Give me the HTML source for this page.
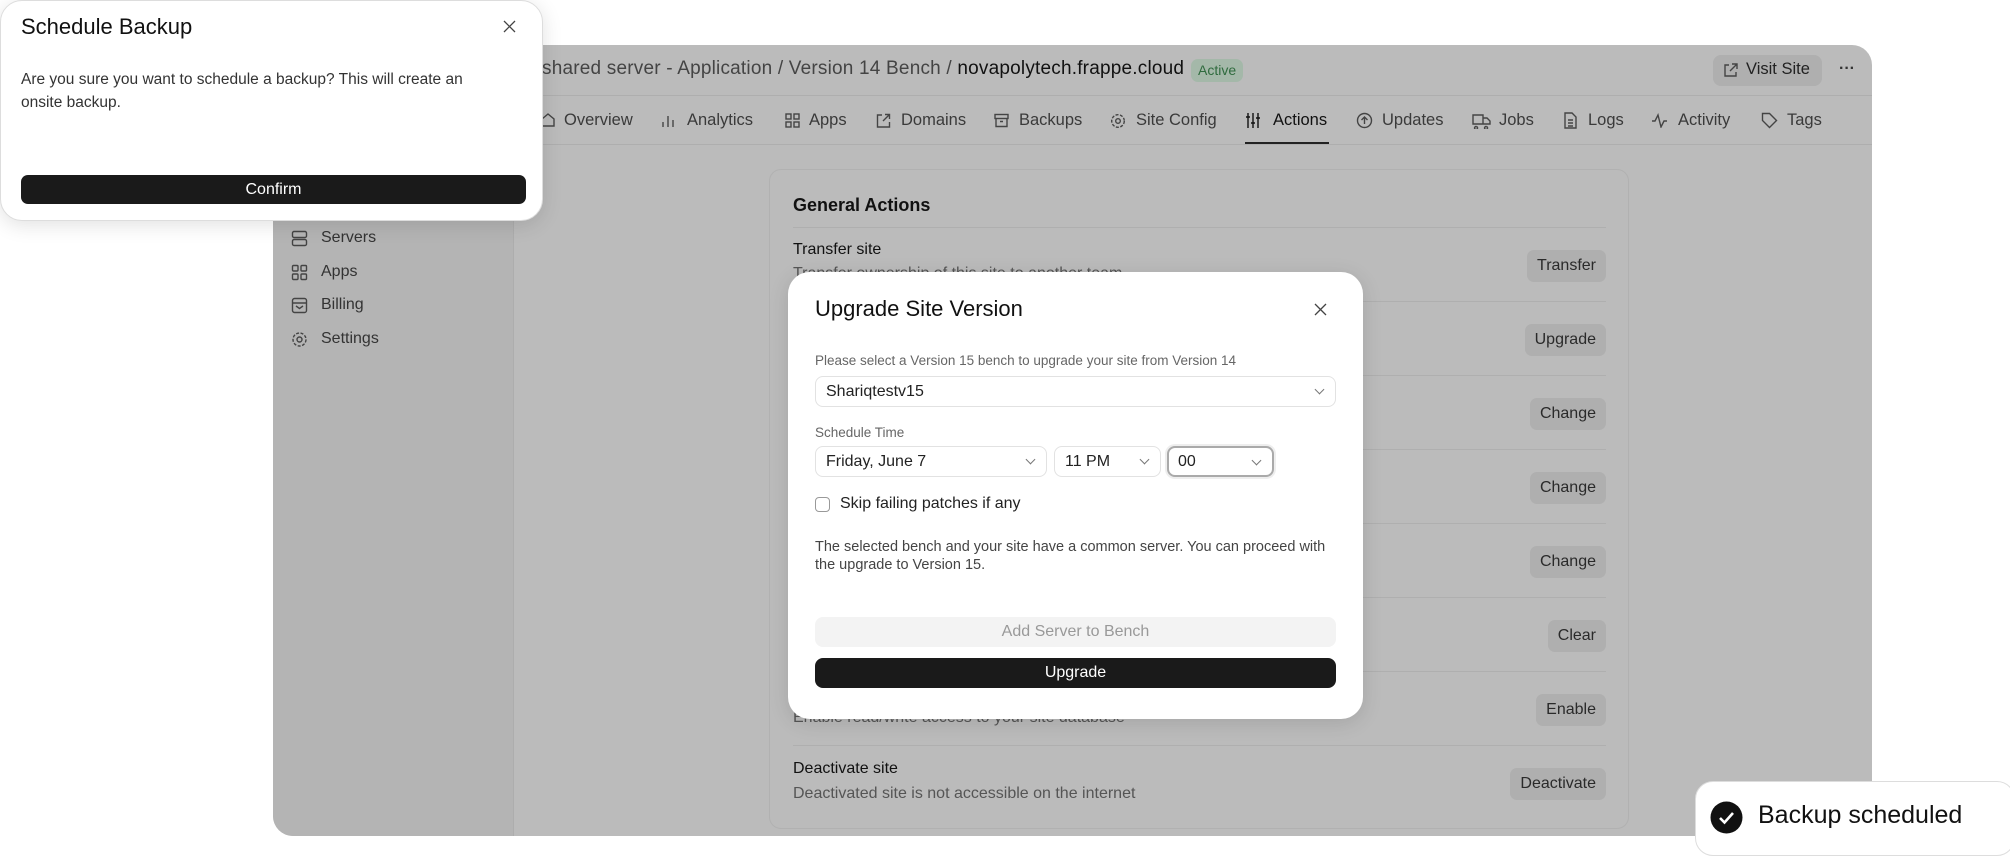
<!DOCTYPE html>
<html><head><meta charset="utf-8"><style>
*{box-sizing:border-box;margin:0;padding:0}
body{width:2010px;height:852px;background:#fff;font-family:"Liberation Sans",sans-serif;position:relative;overflow:hidden;color:#1f1f1f}
.a{position:absolute;white-space:nowrap}
.frame{left:273px;top:45px;width:1599px;height:791px;background:#bbb;border-radius:20px;overflow:hidden}
.side{left:0;top:0;width:241px;height:791px;background:#b4b4b4;border-right:1px solid #adadad}
.hdr{left:241px;top:0;right:0;height:51px;border-bottom:1px solid #aeaeae}
.tabs{left:241px;top:51px;right:0;height:49px;border-bottom:1px solid #aeaeae}
.tab{top:15px;font-size:16.5px;color:#3a3a3a}
.ic{stroke:#444;fill:none;stroke-width:1.4}
.card{left:496px;top:124px;width:860px;height:660px;border:1px solid #b1b1b1;border-radius:12px}
.row{left:23px;width:813px;border-top:1px solid #afafaf;height:74px}
.btn{right:23px;background:#afafaf;border-radius:7px;font-size:16px;color:#2a2a2a;padding:7px 10px}
.t{font-size:16px;color:#111;font-weight:500}
.d{font-size:16px;color:#555}
.modal{background:#fff;border-radius:22px;box-shadow:0 4px 20px rgba(0,0,0,.12)}
.sel{border:1px solid #e2e2e2;border-radius:8px;height:31px;font-size:16px;color:#222;padding:6px 10px;background:#fff}
.chev{position:absolute;right:12px;top:9px;width:7px;height:7px;border-right:1.2px solid #777;border-bottom:1.2px solid #777;transform:rotate(45deg)}
</style></head><body>

<div class="a frame">
 <div class="a side">
  <svg class="a" style="left:18px;top:185px" width="17" height="17" viewBox="0 0 17 17"><rect class="ic" x="1.5" y="1.5" width="14" height="6" rx="1.5"/><rect class="ic" x="1.5" y="9.5" width="14" height="6" rx="1.5"/></svg>
  <div class="a" style="left:48px;top:184px;font-size:16px;color:#333">Servers</div>
  <svg class="a" style="left:18px;top:219px" width="17" height="17" viewBox="0 0 17 17"><rect class="ic" x="1.5" y="1.5" width="5.5" height="5.5" rx="1"/><rect class="ic" x="10" y="1.5" width="5.5" height="5.5" rx="1"/><rect class="ic" x="1.5" y="10" width="5.5" height="5.5" rx="1"/><rect class="ic" x="10" y="10" width="5.5" height="5.5" rx="1"/></svg>
  <div class="a" style="left:48px;top:218px;font-size:16px;color:#333">Apps</div>
  <svg class="a" style="left:18px;top:252px" width="17" height="17" viewBox="0 0 17 17"><rect class="ic" x="1.5" y="1.5" width="14" height="14" rx="2"/><path class="ic" d="M1.5 6h14M5 9l3.5 2.5L12 9"/></svg>
  <div class="a" style="left:48px;top:251px;font-size:16px;color:#333">Billing</div>
  <svg class="a" style="left:18px;top:286px" width="17" height="17" viewBox="0 0 17 17"><circle class="ic" cx="8.5" cy="8.5" r="2.5"/><circle class="ic" cx="8.5" cy="8.5" r="6.5" stroke-dasharray="3 1.5"/></svg>
  <div class="a" style="left:48px;top:285px;font-size:16px;color:#333">Settings</div>
 </div>
 <div class="a hdr">
  <div class="a" style="left:28px;top:13px;font-size:19px;color:#444;letter-spacing:0.2px">shared server - Application / Version 14 Bench / <span style="color:#111">novapolytech.frappe.cloud</span></div>
  <div class="a" style="left:677px;top:14px;height:23px;padding:3px 7px;background:#a4b8a9;color:#2f6b3e;font-size:14px;border-radius:7px">Active</div>
  <div class="a" style="left:1199px;top:10px;width:109px;height:31px;background:#afafaf;border-radius:8px"></div>
  <svg class="a" style="left:1208px;top:17px" width="17" height="17" viewBox="0 0 17 17"><path class="ic" d="M7 3H3v11h11v-4M10 2h5v5M15 2L8 9"/></svg>
  <div class="a" style="left:1232px;top:15px;font-size:16.5px;color:#222">Visit Site</div>
  <div class="a" style="left:1325px;top:15px;font-size:16px;color:#333;font-weight:bold">···</div>
 </div>
 <div class="a tabs">
  <svg class="a" style="left:26px;top:16px" width="16" height="16"><path class="ic" d="M2 7l6-5 6 5v7H2z"/></svg><div class="a tab" style="left:50px">Overview</div>
  <svg class="a" style="left:147px;top:17px" width="15" height="15"><path class="ic" d="M2 14V9M7 14V3M12 14V7"/></svg><div class="a tab" style="left:173px">Analytics</div>
  <svg class="a" style="left:271px;top:17px" width="15" height="15"><rect class="ic" x="1" y="1" width="5" height="5"/><rect class="ic" x="9" y="1" width="5" height="5"/><rect class="ic" x="1" y="9" width="5" height="5"/><rect class="ic" x="9" y="9" width="5" height="5"/></svg><div class="a tab" style="left:295px">Apps</div>
  <svg class="a" style="left:362px;top:17px" width="15" height="15"><path class="ic" d="M6 2H1.5v12h12V9M9 1.5h4.5V6M13.5 1.5L7 8"/></svg><div class="a tab" style="left:387px">Domains</div>
  <svg class="a" style="left:480px;top:17px" width="15" height="15"><rect class="ic" x="1" y="1.5" width="13" height="4"/><path class="ic" d="M2 5.5v8h11v-8M6 8.5h3"/></svg><div class="a tab" style="left:505px">Backups</div>
  <svg class="a" style="left:596px;top:17px" width="16" height="16"><circle class="ic" cx="8" cy="8" r="2.3"/><circle class="ic" cx="8" cy="8" r="6.3" stroke-dasharray="3 1.5"/></svg><div class="a tab" style="left:622px">Site Config</div>
  <svg class="a" style="left:731px;top:16px" width="16" height="17"><path class="ic" style="stroke:#111" d="M3 1v15M8 1v15M13 1v15M1 5h4M6 11h4M11 6h4"/></svg><div class="a tab" style="left:759px;color:#111">Actions</div>
  <div class="a" style="left:731px;top:46px;width:84px;height:2px;background:#222"></div>
  <svg class="a" style="left:842px;top:16px" width="17" height="17"><circle class="ic" cx="8.5" cy="8.5" r="7"/><path class="ic" d="M8.5 12V5M5.5 8l3-3 3 3"/></svg><div class="a tab" style="left:868px">Updates</div>
  <svg class="a" style="left:958px;top:17px" width="19" height="16"><path class="ic" d="M1 2h10v9H1zM11 5h4l3 3v3h-7M4 13.5a1.5 1.5 0 1 0 .1 0M14 13.5a1.5 1.5 0 1 0 .1 0"/></svg><div class="a tab" style="left:985px">Jobs</div>
  <svg class="a" style="left:1049px;top:16px" width="15" height="17"><path class="ic" d="M2 1h7l4 4v11H2zM5 8h5M5 11h5M5 14h5"/></svg><div class="a tab" style="left:1074px">Logs</div>
  <svg class="a" style="left:1137px;top:17px" width="17" height="15"><path class="ic" d="M1 8h3l3-6 3 12 3-6h3"/></svg><div class="a tab" style="left:1164px">Activity</div>
  <svg class="a" style="left:1247px;top:16px" width="17" height="17"><path class="ic" d="M1.5 1.5h7l7 7-7 7-7-7z"/></svg><div class="a tab" style="left:1273px">Tags</div>
 </div>
 <div class="a card">
  <div class="a" style="left:23px;top:25px;font-size:18px;font-weight:bold;color:#111">General Actions</div>
  <div class="a row" style="top:57px"><div class="a t" style="left:0;top:13px">Transfer site</div><div class="a d" style="left:0;top:37px">Transfer ownership of this site to another team</div><div class="a btn" style="top:22px;right:0">Transfer</div></div>
  <div class="a row" style="top:131px"><div class="a btn" style="top:22px;right:0">Upgrade</div></div>
  <div class="a row" style="top:205px"><div class="a btn" style="top:22px;right:0">Change</div></div>
  <div class="a row" style="top:279px"><div class="a btn" style="top:22px;right:0">Change</div></div>
  <div class="a row" style="top:353px"><div class="a btn" style="top:22px;right:0">Change</div></div>
  <div class="a row" style="top:427px"><div class="a btn" style="top:22px;right:0">Clear</div></div>
  <div class="a row" style="top:501px"><div class="a d" style="left:0;top:37px">Enable read/write access to your site database</div><div class="a btn" style="top:22px;right:0">Enable</div></div>
  <div class="a row" style="top:575px"><div class="a t" style="left:0;top:14px">Deactivate site</div><div class="a d" style="left:0;top:39px">Deactivated site is not accessible on the internet</div><div class="a btn" style="top:22px;right:0">Deactivate</div></div>
 </div>
</div>

<!-- Schedule Backup modal -->
<div class="a modal" style="left:0;top:0;width:543px;height:221px;border:1px solid #ddd;border-radius:22px">
 <div class="a" style="left:20px;top:13px;font-size:22px;font-weight:500;color:#111">Schedule Backup</div>
 <svg class="a" style="left:502px;top:19px" width="13" height="13"><path d="M1 1l11 11M12 1L1 12" stroke="#444" stroke-width="1.3"/></svg>
 <div class="a" style="left:20px;top:67px;font-size:15.5px;color:#333;line-height:23px;white-space:normal;width:475px">Are you sure you want to schedule a backup? This will create an onsite backup.</div>
 <div class="a" style="left:20px;top:174px;width:505px;height:29px;background:#1a1a1a;border-radius:7px;color:#fff;font-size:16px;text-align:center;line-height:29px">Confirm</div>
</div>

<!-- Upgrade modal -->
<div class="a modal" style="left:788px;top:272px;width:575px;height:447px">
 <div class="a" style="left:27px;top:24px;font-size:22px;font-weight:500;color:#111">Upgrade Site Version</div>
 <svg class="a" style="left:526px;top:31px" width="13" height="13"><path d="M1 1l11 11M12 1L1 12" stroke="#444" stroke-width="1.3"/></svg>
 <div class="a" style="left:27px;top:81px;font-size:13.5px;color:#666">Please select a Version 15 bench to upgrade your site from Version 14</div>
 <div class="a sel" style="left:27px;top:104px;width:521px">Shariqtestv15<div class="chev"></div></div>
 <div class="a" style="left:27px;top:153px;font-size:13.5px;color:#666">Schedule Time</div>
 <div class="a sel" style="left:27px;top:174px;width:232px">Friday, June 7<div class="chev"></div></div>
 <div class="a sel" style="left:266px;top:174px;width:107px">11 PM<div class="chev"></div></div>
 <div class="a sel" style="left:379px;top:174px;width:107px;border:2px solid #aaa;box-shadow:0 0 0 2px #eee;padding:5px 9px">00<div class="chev"></div></div>
 <div class="a" style="left:27px;top:225px;width:15px;height:15px;border:1.3px solid #999;border-radius:4px"></div>
 <div class="a" style="left:52px;top:223px;font-size:16px;color:#222">Skip failing patches if any</div>
 <div class="a" style="left:27px;top:266px;font-size:14.5px;color:#444;line-height:18px;white-space:normal;width:515px">The selected bench and your site have a common server. You can proceed with the upgrade to Version 15.</div>
 <div class="a" style="left:27px;top:345px;width:521px;height:30px;background:#f3f3f3;border-radius:8px;color:#999;font-size:16px;text-align:center;line-height:30px">Add Server to Bench</div>
 <div class="a" style="left:27px;top:386px;width:521px;height:30px;background:#1a1a1a;border-radius:8px;color:#fff;font-size:16px;text-align:center;line-height:30px">Upgrade</div>
</div>

<!-- Toast -->
<div class="a" style="left:1695px;top:781px;width:320px;height:75px;background:#fff;border:1px solid #ddd;border-radius:18px">
 <svg class="a" style="left:14px;top:19px" width="33" height="33"><circle cx="16.5" cy="16.5" r="16" fill="#111"/><path d="M10 17l4.5 4.5L23 12" stroke="#fff" stroke-width="2.6" fill="none"/></svg>
 <div class="a" style="left:62px;top:19px;font-size:25px;color:#111">Backup scheduled</div>
</div>
</body></html>
